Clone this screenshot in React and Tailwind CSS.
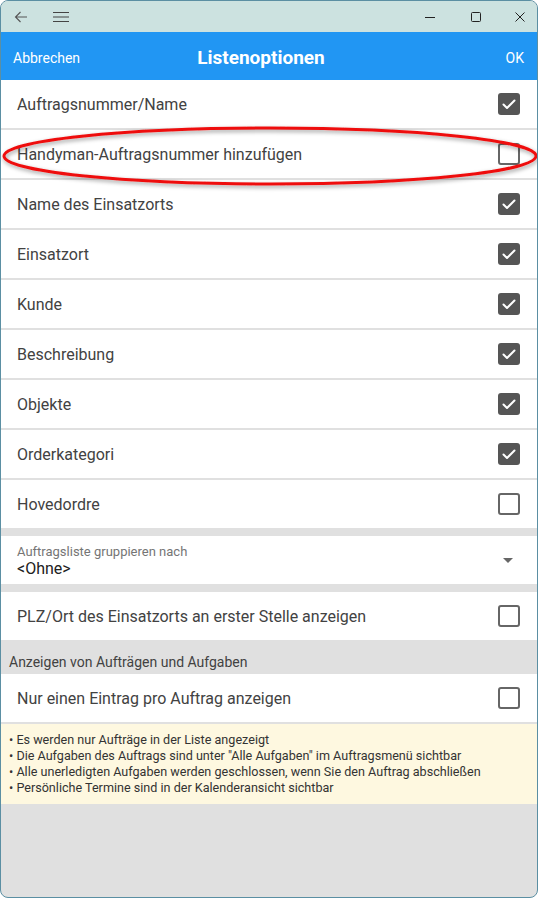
const rows = [
  { label: 'Auftragsnummer/Name', checked: true },
  { label: 'Handyman-Auftragsnummer hinzufügen', checked: false },
  { label: 'Name des Einsatzorts', checked: true },
  { label: 'Einsatzort', checked: true },
  { label: 'Kunde', checked: true },
  { label: 'Beschreibung', checked: true },
  { label: 'Objekte', checked: true },
  { label: 'Orderkategori', checked: true },
  { label: 'Hovedordre', checked: false },
];

const notes = [
  'Es werden nur Aufträge in der Liste angezeigt',
  'Die Aufgaben des Auftrags sind unter "Alle Aufgaben" im Auftragsmenü sichtbar',
  'Alle unerledigten Aufgaben werden geschlossen, wenn Sie den Auftrag abschließen',
  'Persönliche Termine sind in der Kalenderansicht sichtbar',
];

const Checkbox = ({ checked }) =>
  checked ? (
    <div className="w-[22px] h-[22px] rounded-[3px] bg-[#555555] flex items-center justify-center">
      <svg width="16" height="16" viewBox="0 0 16 16" fill="none">
        <path d="M2.5 8.5l3.5 3.5 7.5-7.5" stroke="white" strokeWidth="2" strokeLinecap="round" strokeLinejoin="round" />
      </svg>
    </div>
  ) : (
    <div className="w-[22px] h-[22px] rounded-[3px] border-2 border-[#666666]" />
  );

const Row = ({ label, checked, last }) => (
  <div className={`h-[48px] bg-white flex items-center justify-between pl-[16px] pr-[17px] ${last ? '' : 'border-b-2 border-[#e0e0e0] box-content'}`}>
    <span className="text-[16px] text-[#424242] pt-[2px]">{label}</span>
    <Checkbox checked={checked} />
  </div>
);

export default function App() {
  return (
    <div className="w-[538px] h-[898px] rounded-[8px] border border-[#5b8fa3] overflow-hidden bg-[#e0e0e0] flex flex-col relative" style={{ fontFamily: 'Roboto, "Noto Sans", sans-serif' }}>
      {/* title bar */}
      <div className="h-[31px] bg-[#cce2e0] flex items-center shrink-0">
        <svg className="ml-[13px]" width="14" height="12" viewBox="0 0 14 12" fill="none" stroke="#555" strokeWidth="1.1">
          <path d="M13 6H1.5M6.5 1L1.5 6l5 5" />
        </svg>
        <svg className="ml-[25px]" width="16" height="12" viewBox="0 0 16 12" stroke="#444" strokeWidth="1.1">
          <path d="M0 1.5h16M0 6h16M0 10.5h16" />
        </svg>
        <div className="flex-1" />
        <svg width="10" height="10" viewBox="0 0 10 10" stroke="#222" strokeWidth="1">
          <path d="M0 5.5h10" />
        </svg>
        <svg className="ml-[36px]" width="10" height="10" viewBox="0 0 10 10" fill="none" stroke="#222" strokeWidth="1">
          <rect x="0.5" y="0.5" width="9" height="9" rx="1" />
        </svg>
        <svg className="ml-[34px] mr-[12px]" width="10" height="10" viewBox="0 0 10 10" stroke="#222" strokeWidth="1">
          <path d="M0.5 0.5l9 9M9.5 0.5l-9 9" />
        </svg>
      </div>
      {/* header */}
      <div className="h-[48px] bg-[#2196f3] flex items-center justify-between px-[12px] pt-[4px] shrink-0 relative">
        <span className="text-white text-[14px]">Abbrechen</span>
        <span className="absolute left-0 right-[16px] top-0 bottom-0 pt-[4px] flex items-center justify-center text-white text-[19px] font-bold pointer-events-none">Listenoptionen</span>
        <span className="text-white text-[14px] mr-[1px]">OK</span>
      </div>
      {/* checkbox rows */}
      <div className="flex flex-col shrink-0">
        {rows.map((r, i) => (
          <Row key={r.label} label={r.label} checked={r.checked} last={i === rows.length - 1} />
        ))}
      </div>
      <div className="h-[8px] shrink-0" />
      {/* dropdown */}
      <div className="h-[48px] bg-white flex items-center justify-between pl-[16px] pr-[24px] shrink-0">
        <div className="flex flex-col pt-[2px]">
          <span className="text-[13px] text-[#757575] leading-[16px]">Auftragsliste gruppieren nach</span>
          <span className="text-[16px] text-[#212121] leading-[18px]">&lt;Ohne&gt;</span>
        </div>
        <svg width="10" height="5" viewBox="0 0 10 5" fill="#666">
          <path d="M0 0h10L5 5z" />
        </svg>
      </div>
      <div className="h-[8px] shrink-0" />
      <Row label="PLZ/Ort des Einsatzorts an erster Stelle anzeigen" checked={false} last />
      {/* section header */}
      <div className="h-[34px] flex items-center pl-[8px] pt-[10px] shrink-0">
        <span className="text-[14px] text-[#424242]">Anzeigen von Aufträgen und Aufgaben</span>
      </div>
      <Row label="Nur einen Eintrag pro Auftrag anzeigen" checked={false} />
      {/* notes */}
      <div className="bg-[#fef8e0] pl-[8px] pt-[8px] pb-[8px] flex flex-col shrink-0">
        {notes.map((n) => (
          <span key={n} className="text-[12.6px] leading-[16px] text-[#333333]">• {n}</span>
        ))}
      </div>
      {/* annotation ellipse */}
      <svg className="absolute left-0 top-0 pointer-events-none" width="538" height="898">
        <defs>
          <filter id="sh" x="-10%" y="-50%" width="120%" height="200%">
            <feDropShadow dx="1" dy="2" stdDeviation="2" floodColor="#000" floodOpacity="0.4" />
          </filter>
        </defs>
        <ellipse cx="269" cy="155" rx="266" ry="28" fill="none" stroke="#ee1111" strokeWidth="3" filter="url(#sh)" />
      </svg>
    </div>
  );
}
